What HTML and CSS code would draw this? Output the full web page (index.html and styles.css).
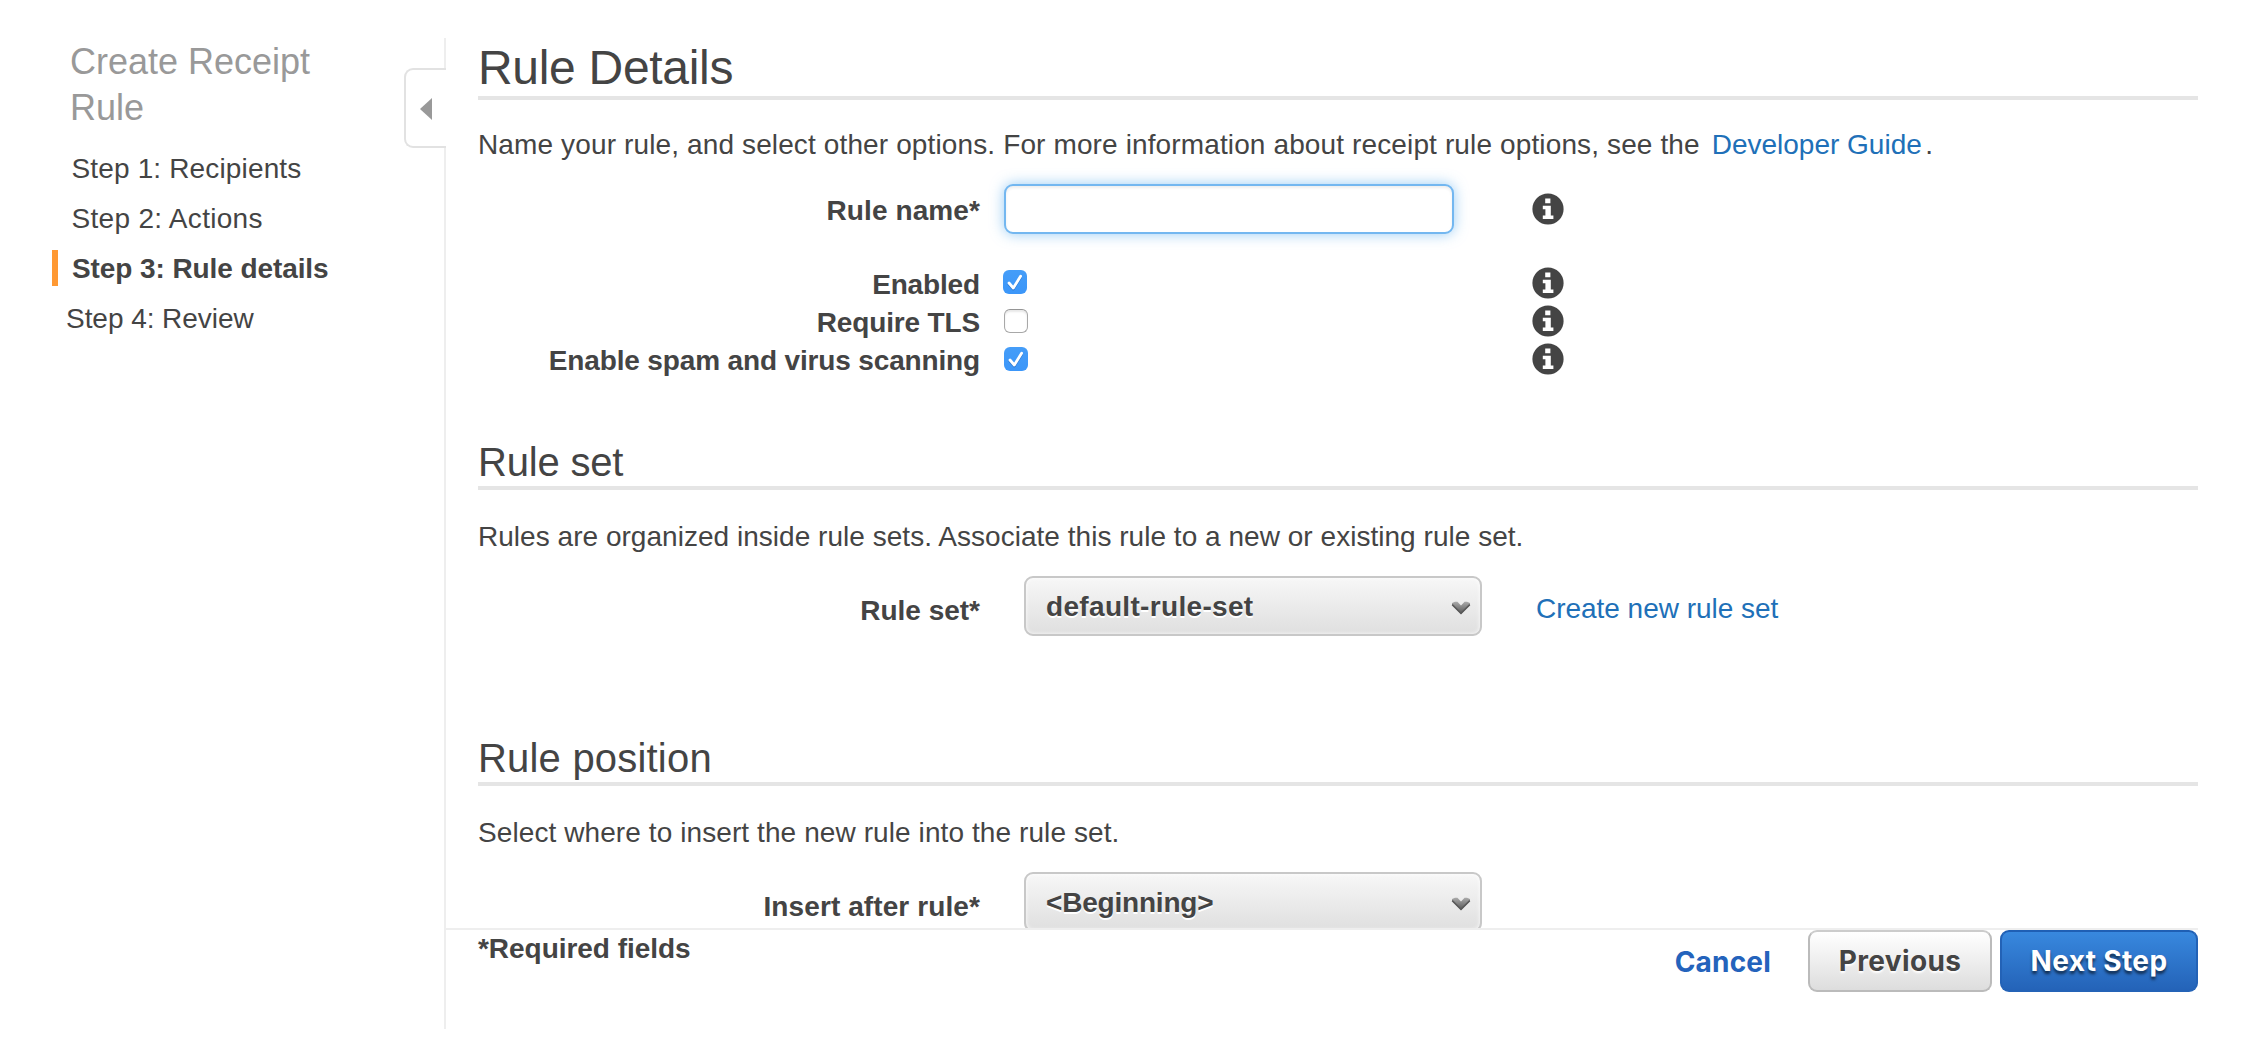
FILE: index.html
```html
<!DOCTYPE html>
<html lang="en">
<head>
<meta charset="utf-8">
<title>Create Receipt Rule</title>
<link rel="stylesheet" href="styles.css">
</head>
<body>
<svg class="defs" aria-hidden="true">
  <symbol id="info" viewBox="0 0 32 32">
    <circle cx="16" cy="16" r="15.6" fill="#444"/>
    <path d="M13.2 5.6h5.2v4.6h-5.2zM10.8 12.8h8v9.8h2.6v3.4H10.8v-3.4h2.6v-6.4h-2.6z" fill="#fff"/>
  </symbol>
  <symbol id="check" viewBox="0 0 24 24">
    <path d="M6 13l4.3 5L17.6 6.2" fill="none" stroke="#fff" stroke-width="2.8" stroke-linecap="round" stroke-linejoin="round"/>
  </symbol>
  <symbol id="chevron" viewBox="0 0 20 14">
    <linearGradient id="chev-fill" x1="0" y1="0" x2="0" y2="1">
      <stop offset="0" stop-color="#aaa"/><stop offset="1" stop-color="#555"/>
    </linearGradient>
    <path d="M1 2L4 .8h2.4L10 4.6 13.6.8H16L19 2v2L10 13 1 4z" fill="url(#chev-fill)"/>
    <path d="M1.2 3.6L10 12.4l8.8-8.8" fill="none" stroke="#5a5a5a" stroke-width="1.5"/>
  </symbol>
</svg>
<div class="wizard">
  <aside class="sidebar">
    <h2 class="sidebar-title">Create Receipt<br>Rule</h2>
    <ol class="steps">
      <li class="step step-one">Step 1: Recipients</li>
      <li class="step step-two">Step 2: Actions</li>
      <li class="step step-current">Step 3: Rule details</li>
      <li class="step step-next">Step 4: Review</li>
    </ol>
    <div class="collapse"><svg class="collapse-arrow" viewBox="0 0 12 22"><path d="M12 0v22L0 11z" fill="#999"/></svg></div>
  </aside>
  <main class="main">
    <div class="content">
      <h1 class="page-title">Rule Details</h1>
      <p class="intro intro-details">Name your rule, and select other options. For more information about receipt rule options, see the <a class="link guide">Developer Guide</a>.</p>
      <div class="row name-row">
        <label class="label">Rule name*</label>
        <input class="text-input" type="text">
        <svg class="info"><use href="#info"/></svg>
      </div>
      <div class="checks">
        <div class="row check-row">
          <label class="label tight">Enabled</label>
          <span class="checkbox checked first"><svg class="tick"><use href="#check"/></svg></span>
          <svg class="info"><use href="#info"/></svg>
        </div>
        <div class="row check-row">
          <label class="label tight">Require TLS</label>
          <span class="checkbox"></span>
          <svg class="info"><use href="#info"/></svg>
        </div>
        <div class="row check-row">
          <label class="label tight">Enable spam and virus scanning</label>
          <span class="checkbox checked"><svg class="tick"><use href="#check"/></svg></span>
          <svg class="info"><use href="#info"/></svg>
        </div>
      </div>
      <h2 class="section-title">Rule set</h2>
      <p class="intro intro-set">Rules are organized inside rule sets. Associate this rule to a new or existing rule set.</p>
      <div class="row select-row">
        <label class="label plain">Rule set*</label>
        <div class="select"><span class="value-set">default-rule-set</span><svg class="chevron"><use href="#chevron"/></svg></div>
        <a class="link create">Create new rule set</a>
      </div>
      <h2 class="section-title position-title">Rule position</h2>
      <p class="intro intro-position">Select where to insert the new rule into the rule set.</p>
      <div class="row select-row">
        <label class="label">Insert after rule*</label>
        <div class="select"><span class="value-beginning">&lt;Beginning&gt;</span><svg class="chevron"><use href="#chevron"/></svg></div>
      </div>
    </div>
    <footer class="footer">
      <span class="required">*Required fields</span>
      <div class="actions">
        <a class="cancel">Cancel</a>
        <button class="button previous">Previous</button>
        <button class="button next">Next Step</button>
      </div>
    </footer>
  </main>
</div>
</body>
</html>
```
FILE: styles.css
```css
* { box-sizing: border-box; }
body {
  margin: 0;
  background: #fff;
  color: #444;
  font-family: "Liberation Sans", Arial, sans-serif;
  font-size: 28px;
}
h1, h2, p, ol { margin: 0; padding: 0; font-weight: normal; }
.defs { display: block; width: 0; height: 0; }

.wizard { display: flex; height: 1054px; padding: 38px 44px 25px 0; overflow: hidden; }

/* Step list */
.sidebar { position: relative; flex: none; width: 446px; border-right: 2px solid #eee; }
.sidebar-title { padding: 1px 0 0 70px; font-size: 36px; line-height: 46px; color: #999; }
.steps { list-style: none; padding: 19px 0 0 52px; display: flex; flex-direction: column; gap: 14px; }
.step { height: 36px; line-height: 38px; padding-left: 19.5px; white-space: nowrap; }
.step-one { letter-spacing: 0.15px; }
.step-two { letter-spacing: 0.3px; }
.step-current { padding-left: 14px; border-left: 6px solid #ff9933; font-weight: bold; letter-spacing: -0.09px; }
.step-next { padding-left: 14px; letter-spacing: -0.05px; }
.collapse {
  position: absolute;
  top: 30px;
  right: -2px;
  width: 42px;
  height: 80px;
  padding: 28px 0 0 14px;
  background: #fff;
  border: 2px solid #e2e2e2;
  border-right: 0;
  border-radius: 9px 0 0 9px;
}
.collapse-arrow { display: block; width: 12px; height: 22px; }

/* Form */
.main { flex: 1; min-width: 0; display: flex; flex-direction: column; }
.content { flex: none; height: 890px; padding-left: 32px; overflow: hidden; }
.page-title { height: 62px; line-height: 59px; font-size: 48px; letter-spacing: -0.3px; border-bottom: 4px solid #e5e5e5; }
.section-title { height: 52px; margin-top: 59px; line-height: 48px; font-size: 40px; letter-spacing: -0.2px; border-bottom: 4px solid #e5e5e5; }
.position-title { margin-top: 98px; letter-spacing: 0.2px; }
.intro { height: 40px; margin-top: 26px; line-height: 42px; white-space: nowrap; }
.intro-details { margin-top: 24px; letter-spacing: 0.127px; }
.intro-set { letter-spacing: 0.03px; }
.intro-position { letter-spacing: 0.09px; }
.link { color: #2070b8; }
.guide { margin: 0 3.5px 0 4px; letter-spacing: 0; }

.row { display: grid; grid-template-columns: 502px 552px 1fr; align-items: start; }
.label { text-align: right; font-weight: bold; letter-spacing: 0.1px; white-space: nowrap; }
.label.tight { letter-spacing: -0.15px; }
.label.plain { letter-spacing: 0; }
.name-row { height: 50px; margin-top: 20px; }
.name-row .label { line-height: 54px; }
.name-row .info { margin-top: 8.5px; }
.text-input {
  width: 450px;
  height: 50px;
  margin: 0 0 0 24px;
  border: 2px solid #73b7f0;
  border-radius: 9px;
  outline: 0;
  background: #fff;
  box-shadow: 0 0 14px rgba(82, 168, 236, 0.6), inset 0 2px 3px rgba(0, 0, 0, 0.07);
}
.info { display: block; width: 32px; height: 32px; margin-top: 1.5px; }

.checks { margin-top: 31px; }
.check-row { height: 38px; line-height: 40px; }
.checkbox {
  width: 24px;
  height: 24px;
  margin: 6px 0 0 24px;
  border: 1.5px solid #a8a8a8;
  border-top-color: #959595;
  border-radius: 6px;
  background: #fff;
  box-shadow: inset 0 2px 2px #e8e8e8;
}
.checkbox.checked { border: 0; background: linear-gradient(#459df8, #3b96f9); box-shadow: none; }
.checkbox.first { margin: 5px 0 0 23px; }
.tick { display: block; width: 24px; height: 24px; filter: drop-shadow(0 1px 0 rgba(0, 50, 120, 0.35)); }

.select-row { height: 60px; margin-top: 20px; grid-template-columns: 502px 555px 1fr; }
.select-row .label { line-height: 70px; }
.select {
  display: flex;
  align-items: flex-start;
  justify-content: space-between;
  width: 458px;
  height: 60px;
  margin-left: 44px;
  padding: 0 9px 0 20px;
  border: 2px solid #c8c8c8;
  border-radius: 9px;
  background: linear-gradient(#f7f7f7, #dfdfdf);
  box-shadow: inset 0 0 4px rgba(255, 255, 255, 0.9);
  font-weight: bold;
  line-height: 58px;
  text-shadow: 0 2px 0 #fff;
}
.value-set { letter-spacing: 0.33px; }
.value-beginning { letter-spacing: -0.2px; }
.chevron { width: 20px; height: 14px; margin-top: 23px; }
.create { padding-left: 1px; line-height: 66px; letter-spacing: -0.03px; }

/* Footer */
.footer { display: flex; justify-content: space-between; border-top: 2px solid #eee; padding-left: 32px; }
.required { line-height: 37px; font-weight: bold; letter-spacing: -0.04px; }
.actions { display: flex; font-family: Inter, sans-serif; font-weight: 700; line-height: 62px; }
.cancel { margin-right: 37px; padding-top: 1px; color: #2463bc; letter-spacing: 0.2px; }
.button {
  height: 62px;
  padding: 1px 0 0;
  border: 2px solid #bbb;
  border-radius: 9px;
  font: 700 28px/57px Inter, sans-serif;
  letter-spacing: 0.35px;
  text-align: center;
  color: #444;
}
.previous { width: 184px; margin-right: 8px; border-top-color: #ccc; background: linear-gradient(#fff, #ddd); text-shadow: 0 2px 2px #fff; }
.next { width: 198px; border-color: #1f5fb4 #2362b6 #2463b7; background: linear-gradient(#3888de, #2463b8); color: #fff; text-shadow: 0 3px 3px rgba(0, 0, 0, 0.6); }
```
